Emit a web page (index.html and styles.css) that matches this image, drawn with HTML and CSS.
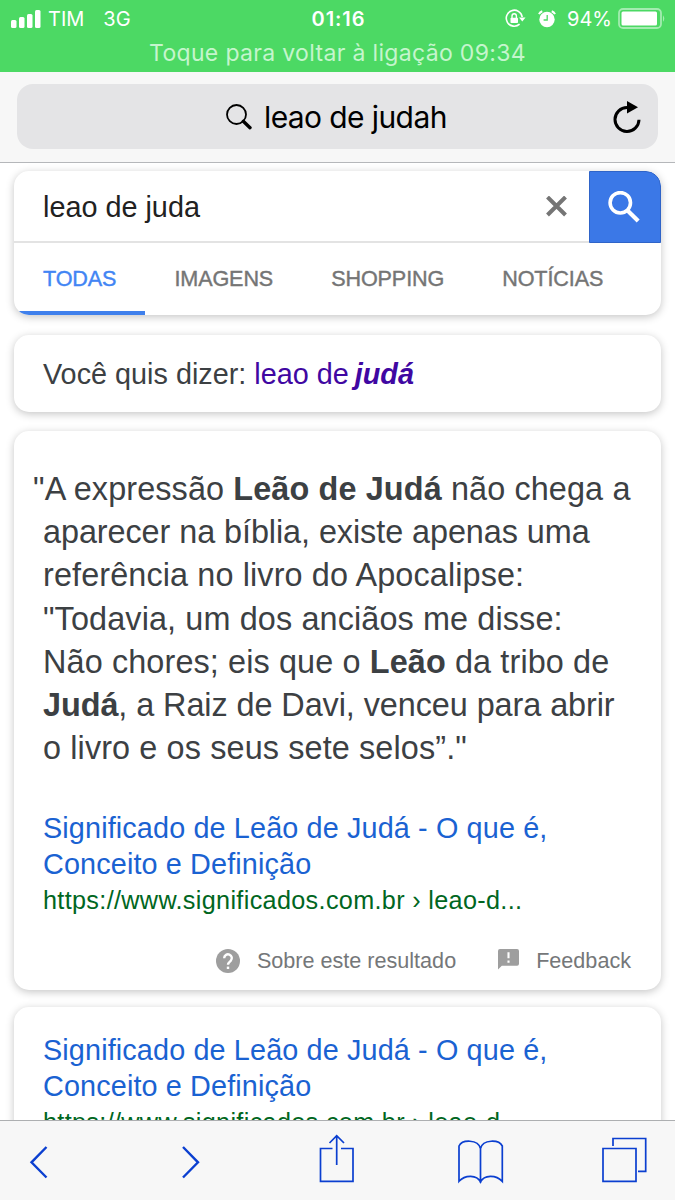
FILE: index.html
```html
<!DOCTYPE html>
<html lang="pt-BR">

<head>
    <meta charset="UTF-8">
    <meta name="viewport" content="width=device-width, initial-scale=1.0">
    <title>leao de juda - Pesquisa</title>
    <link rel="stylesheet" href="styles.css">
</head>

<body>
    <header class="status">
        <div class="status-row">
            <div class="status-left">
                <svg class="signal" width="31" height="18" viewBox="0 0 31 18" fill="#fff">
                    <rect x="0" y="10" width="5.5" height="8" rx="1.5" />
                    <rect x="8" y="7" width="5.5" height="11" rx="1.5" />
                    <rect x="16" y="4" width="5.5" height="14" rx="1.5" />
                    <rect x="24" y="0" width="5.5" height="18" rx="1.5" />
                </svg>
                <span class="carrier">TIM</span>
                <span class="network">3G</span>
            </div>
            <div class="clock">01:16</div>
            <div class="status-right">
                <svg class="lock" width="21" height="20" viewBox="0 0 21 20" fill="none" stroke="#fff" stroke-width="1.6">
                    <path d="M17.2 8A8 8 0 1 0 14.6 15.2" />
                    <path d="M14 8.5h6.5l-3.2 4z" fill="#fff" stroke="none" />
                    <rect x="5.5" y="8.7" width="7.5" height="5.4" rx=".8" fill="#fff" stroke="none" />
                    <path d="M7 9V7a2.2 2.2 0 0 1 4.4 0v2" stroke-width="1.4" />
                </svg>
                <svg class="alarm" width="18" height="18" viewBox="0 0 18 18" fill="none" stroke="#fff">
                    <circle cx="9" cy="9.5" r="7.7" fill="#fff" stroke="none" />
                    <path d="M1 4.2Q2 2 4.3 1.2M13.7 1.2Q16 2 17 4.2" stroke-width="2" />
                    <path d="M9.2 5v5H5.6" stroke="#4cd964" stroke-width="1.3" />
                </svg>
                <span class="percent">94%</span>
                <svg class="battery" width="48" height="21" viewBox="0 0 48 21">
                    <rect x="1" y="1" width="42" height="19" rx="4" fill="none" stroke="#a3ecb0" stroke-width="1.8" />
                    <rect x="3.5" y="3.6" width="35.5" height="14" rx="1.5" fill="#fff" />
                    <path d="M45 7.2q2.6 3.3 0 6.6z" fill="#a3ecb0" />
                </svg>
            </div>
        </div>
        <div class="call-text">Toque para voltar à ligação 09:34</div>
    </header>

    <div class="address">
        <div class="address-field">
            <svg class="address-icon" width="26" height="26" viewBox="0 0 26 26" fill="none" stroke="#000">
                <circle cx="10.5" cy="10.5" r="9.5" stroke-width="1.8" />
                <path d="M17.3 17.3L24 23.7" stroke-width="3.4" stroke-linecap="round" />
            </svg>
            <span class="address-text">leao de judah</span>
            <svg class="reload" width="28" height="32" viewBox="0 0 28 32">
                <path d="M14.3 6.5A12 12 0 1 0 26 18.8" fill="none" stroke="#000" stroke-width="3" />
                <path d="M14 0v12.5L25 6.2z" />
            </svg>
        </div>
    </div>

    <main class="page">
        <section class="card search-card">
            <div class="search-row">
                <span class="query">leao de juda</span>
                <svg class="clear" width="21" height="21" viewBox="0 0 21 21" fill="none" stroke="#757575" stroke-width="4">
                    <path d="M1.500 1l18 18M19.500 1l-18 18" />
                </svg>
                <button class="search-button" aria-label="Pesquisar">
                    <svg width="32" height="32" viewBox="0 0 32 32" fill="none" stroke="#fff">
                        <circle cx="12.3" cy="11.8" r="10.2" stroke-width="3.6" />
                        <path d="M19 19l11.2 11" stroke-width="4.2" />
                    </svg>
                </button>
            </div>
            <nav class="tabs">
                <span class="tab active">TODAS</span>
                <span class="tab">IMAGENS</span>
                <span class="tab">SHOPPING</span>
                <span class="tab">NOTÍCIAS</span>
            </nav>
        </section>

        <section class="card spelling">
            Você quis dizer: <a href="#">leao de <b><i>judá</i></b></a>
        </section>

        <section class="card answer">
            <p class="quote"><span class="hang">"</span>A expressão <b>Leão de Judá</b> não chega a<br>
                <span class="tight">aparecer na bíblia, existe apenas uma</span><br>
                referência no livro do Apocalipse:<br>
                "Todavia, um dos anciãos me disse:<br>
                Não chores; eis que o <b>Leão</b> da tribo de<br>
                <span class="tight"><b>Judá</b>, a Raiz de Davi, venceu para abrir</span><br>
                o livro e os seus sete selos”."</p>
            <div class="result">
                <a class="title" href="#">Significado de Leão de Judá - O que é,<br>Conceito e Definição</a>
                <div class="url">https://www.significados.com.br › leao-d...</div>
            </div>
            <div class="about">
                <svg class="help" width="24" height="24" viewBox="0 0 24 24">
                    <circle cx="12" cy="12" r="12" fill="#9e9e9e" />
                    <path d="M8.2 9.2a3.8 3.8 0 1 1 6.5 2.6c-1.6 1.5-2.7 2-2.7 4" fill="none" stroke="#fff" stroke-width="2.4" />
                    <rect x="10.8" y="17.6" width="2.4" height="2.4" fill="#fff" />
                </svg>
                <span class="about-text">Sobre este resultado</span>
                <svg class="flag" width="21" height="21" viewBox="0 0 22 22">
                    <path d="M2 0h18q2 0 2 2v13.5q0 2-2 2H4L0 21.5V2Q0 0 2 0z" fill="#9e9e9e" />
                    <path d="M11 3.5v6.3M11 12v2.3" stroke="#fff" stroke-width="2.2" />
                </svg>
                <span class="feedback-text">Feedback</span>
            </div>
        </section>

        <section class="card next-result">
            <a class="title" href="#">Significado de Leão de Judá - O que é,<br>Conceito e Definição</a>
            <div class="url">https://www.significados.com.br › leao-d...</div>
        </section>
    </main>

    <footer class="toolbar">
        <svg width="675" height="79" viewBox="0 1121 675 79" fill="none" stroke="#0b3fd0" stroke-width="2">
            <path d="M46.5 1147L31.5 1162.3L46.5 1177.5" stroke-width="2.4" />
            <path d="M183 1147L198 1162.3L183 1177.5" stroke-width="2.4" />
            <path d="M332.5 1148.5H320.5V1181.3H353V1148.5H341M336.7 1165V1135.5M329.5 1143L336.7 1135.7L344 1143" stroke-width="1.7" />
            <path d="M480.5 1148.5C478 1139 462 1139.5 459 1146V1181.3C465 1174.5 477 1174.5 480.5 1182C484 1174.5 496 1174.5 502.3 1181.3V1146C499 1139.5 483 1139 480.5 1148.5V1183" stroke-width="1.7" />
            <path d="M603 1148.5H636V1181.3H603ZM613 1146V1138.5H645.7V1171.3H638" stroke-width="1.7" />
        </svg>
    </footer>
</body>

</html>
```
FILE: styles.css
```css
* {
    box-sizing: border-box;
}

body {
    margin: 0;
    width: 675px;
    height: 1200px;
    overflow: hidden;
    display: flex;
    flex-direction: column;
    font-family: "Liberation Sans", Arial, sans-serif;
    background-color: #fff;
    color: #3c4043;
}

a {
    text-decoration: none;
}

svg {
    display: block;
    flex: none;
}

/* status bar */
.status {
    height: 72px;
    flex: none;
    background-color: #4cd964;
    color: #fff;
    font-family: Inter, sans-serif;
}

.status-row {
    height: 37px;
    display: grid;
    grid-template-columns: 1fr auto 1fr;
    align-items: center;
    padding: 0 9px 0 11px;
    font-size: 20px;
}

.status-left,
.status-right {
    display: flex;
    align-items: center;
}

.status-right {
    justify-content: flex-end;
}

.carrier {
    margin-left: 6px;
}

.network {
    margin-left: 19px;
}

.clock {
    font-weight: 600;
    letter-spacing: 0.9px;
}

.alarm {
    margin-left: 12px;
}

.percent {
    margin-left: 11px;
    margin-right: 6px;
}

.call-text {
    text-align: center;
    font-size: 23px;
    line-height: 32px;
    letter-spacing: 0.33px;
    color: #c5f5cd;
}

/* address bar */
.address {
    height: 91px;
    flex: none;
    padding: 12px 17px 0;
    background-color: #f7f7f7;
    border-bottom: 1px solid #b5b7ba;
}

.address-field {
    height: 65px;
    display: flex;
    align-items: center;
    padding: 0 17px 0 209px;
    border-radius: 16px;
    background-color: #e4e4e6;
    color: #000;
}

.address-text {
    margin-left: 12px;
    font-family: Inter, sans-serif;
    font-size: 30px;
    letter-spacing: -0.6px;
}

.reload {
    margin-left: auto;
}

/* results */
.page {
    flex: 1;
    min-height: 0;
    overflow: hidden;
    padding: 8px 14px 0;
    display: flex;
    flex-direction: column;
}

.card {
    flex: none;
    border-radius: 15px;
    background-color: #fff;
    box-shadow: 0 2px 8px rgba(0, 0, 0, 0.23);
}

.search-card {
    height: 144px;
    overflow: hidden;
}

.search-row {
    height: 72px;
    display: flex;
    align-items: center;
    padding-left: 29px;
    border-bottom: 2px solid #e3e3e3;
}

.query {
    padding-top: 2px;
    font-size: 28.8px;
    color: #212121;
}

.clear {
    margin-left: auto;
    margin-right: 22px;
}

.search-button {
    width: 72px;
    height: 72px;
    margin-bottom: -2px;
    padding: 0 0 0 18px;
    border: 1px solid #2f64c8;
    border-radius: 0 15px 0 0;
    background-color: #3b78e7;
}

.tabs {
    height: 72px;
    display: flex;
    font-size: 21.6px;
    line-height: 72px;
    letter-spacing: -0.12px;
    color: #757575;
}

.tab {
    padding: 0 29px;
    -webkit-text-stroke: 0.4px currentColor;
}

.tab.active {
    color: #4285f4;
    border-bottom: 4px solid #3f80ec;
}

.spelling {
    height: 77px;
    margin-top: 20px;
    padding-left: 29px;
    font-size: 28.8px;
    line-height: 79px;
}

.spelling a {
    color: #4007a2;
}

.spelling b {
    margin-left: -2px;
}

.answer {
    height: 559px;
    margin-top: 19px;
    padding: 37px 29px 0;
}

.quote {
    margin: 0;
    font-size: 32.4px;
    line-height: 43.2px;
    letter-spacing: 0.12px;
    white-space: nowrap;
}

.tight {
    letter-spacing: -0.07px;
}

.hang {
    margin-left: -10px;
}

.result {
    margin-top: 40px;
}

.title {
    display: block;
    font-size: 28.8px;
    line-height: 36px;
    letter-spacing: 0.13px;
    color: #1a62d2;
    white-space: nowrap;
}

.url {
    font-size: 25.2px;
    line-height: 36px;
    letter-spacing: 0.34px;
    color: #006621;
    white-space: nowrap;
}

.about {
    display: flex;
    align-items: center;
    justify-content: flex-end;
    margin-top: 30px;
    padding-right: 1px;
    font-size: 21.6px;
    color: #757779;
}

.about-text {
    margin-left: 17px;
}

.flag {
    margin-left: 42px;
    margin-bottom: 3px;
}

.feedback-text {
    margin-left: 17px;
}

.next-result {
    height: 220px;
    margin-top: 17px;
    padding: 25px 29px 0;
}

/* bottom bar */
.toolbar {
    height: 80px;
    flex: none;
    background-color: #f7f7f7;
    border-top: 1px solid #adafb1;
}
```
